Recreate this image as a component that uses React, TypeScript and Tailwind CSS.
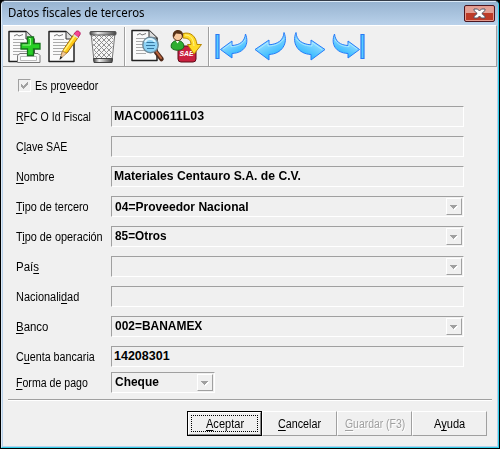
import { useLayoutEffect, useRef, useState } from "react";
import type { ReactNode } from "react";

/* Text condensed or widened to a given width, as the bitmap font sets it. */
function Fit({ w, children, className = "" }: { w: number; children: ReactNode; className?: string }) {
  const ref = useRef<HTMLSpanElement>(null);
  const [k, setK] = useState(1);
  useLayoutEffect(() => {
    if (ref.current) setK(w / ref.current.offsetWidth);
  }, [w]);
  return (
    <span className={"block " + className} style={{ width: w }}>
      <span ref={ref} className="inline-block origin-left whitespace-pre" style={{ transform: `scaleX(${k})` }}>
        {children}
      </span>
    </span>
  );
}

function Hot({ children }: { children: ReactNode }) {
  return <span className="underline decoration-1 underline-offset-[1.5px] [text-decoration-skip-ink:none]">{children}</span>;
}

function DropButton() {
  return (
    <span className="flex h-[17px] w-4 shrink-0 items-center justify-center border border-r-[#a0a0a0] border-b-[#a0a0a0] border-t-white border-l-white">
      <svg width="9" height="6" viewBox="0 0 9 6" shapeRendering="crispEdges">
        <path d="M1 2h7v1H7v1H6v1H5v1H4V5H3V4H2V3H1z" fill="#fff" />
        <path d="M0 1h7v1H6v1H5v1H4v1H3V4H2V3H1V2H0z" fill="#a0a0a0" />
      </svg>
    </span>
  );
}

function Row({ label, lw, value, vw = 0, drop = false, width = "w-[353px]", gap = "mb-[9px]" }: {
  label: ReactNode; lw: number; value?: string; vw?: number; drop?: boolean; width?: string; gap?: string;
}) {
  return (
    <div className={"flex h-[21px] " + gap}>
      <label className="w-[95px] shrink-0 pt-[3px] text-[12.5px] leading-[16px]">
        <Fit w={lw}>{label}</Fit>
      </label>
      <div className={"flex justify-between border border-t-[#a0a0a0] border-l-[#a0a0a0] border-r-white border-b-white pt-px pr-px " + width}>
        <div className={"text-[12.5px] leading-4 font-bold " + (drop ? "pl-[3px] " : "pl-[2px] ") + (drop && vw > 100 ? "pt-px" : "")}>
          {value && <Fit w={vw}>{value}</Fit>}
        </div>
        {drop && <DropButton />}
      </div>
    </div>
  );
}

function Button({ children, w, kind = "" }: { children: ReactNode; w: number; kind?: string }) {
  const face = <Fit w={w}>{children}</Fit>;
  if (kind === "default")
    return (
      <button className="h-[25px] w-[75px] border border-black">
        <span className="flex h-full border border-t-white border-l-white border-r-[#888] border-b-[#888] p-[2px]">
          <span className="flex flex-1 items-center justify-center border border-dotted border-black leading-4">{face}</span>
        </span>
      </button>
    );
  return (
    <button
      className={
        "flex h-[25px] w-[75px] items-center justify-center border border-t-white border-l-white border-r-[#a0a0a0] border-b-[#a0a0a0] leading-4 " +
        (kind === "off" ? "text-[#a0a0a0] [text-shadow:1px_1px_0_#fff]" : "")
      }
    >
      {face}
    </button>
  );
}

function Sheet() {
  return (
    <>
      <path d="M1 1.500h17l8 7.500v22.500H1z" fill="#fafafa" stroke="#222" strokeWidth="1.5" strokeLinejoin="round" />
      <path d="M18 1.500v7.500h8" fill="#ddd" stroke="#333" />
      <path d="M6 6l3-1.500 2 1.500 4-1.500" stroke="#777" fill="none" />
      <path d="M5 9.500h11M5 12.500h16M5 15.500h16M5 18.500h16M5 21.500h16M5 24.500h10" stroke="#aaa" fill="none" />
    </>
  );
}

function AddIcon() {
  return (
    <svg width="34" height="34" viewBox="0 0 34 34">
      <Sheet />
      <path d="M12 23.500h18l2 2v7H9.500v-7z" fill="#f6f6f6" stroke="#777" />
      <path d="M12.500 26.500h16v4h-16z" fill="#fff" stroke="#bbb" />
      <path d="M19.500 7h6v6.500h6.500v5.500h-6.500v6.500h-6V19H13v-5.500h6.500z" fill="#27cf25" stroke="#15741a" strokeWidth="1.3" />
      <path d="M21 8.500h1.500v6.500h-8" stroke="#9bf58d" fill="none" />
    </svg>
  );
}

function EditIcon() {
  return (
    <svg width="34" height="34" viewBox="0 0 34 34">
      <Sheet />
      <path d="M13.500 24l2-4.500L26 4l4.500 3L19 23z" fill="#ffcb19" stroke="#a46b08" />
      <path d="M16 21L27.500 5" stroke="#fff27a" strokeWidth="1.500" />
      <path d="M26 4l2-2.500c2-1.500 5 .7 4 3l-2 3z" fill="#f64494" stroke="#b51f60" />
      <path d="M25.500 4.700l4.500 3.200" stroke="#ddd" strokeWidth="1.500" />
      <path d="M12 29l2.500-8 4 2.500z" fill="#f4c792" stroke="#8c6a41" strokeWidth=".6" />
      <path d="M11.500 30l1-4 2 1.500z" fill="#222" />
    </svg>
  );
}

function TrashIcon() {
  return (
    <svg width="28" height="34" viewBox="0 0 28 34">
      <defs>
        <pattern id="mesh" width="5" height="5" patternUnits="userSpaceOnUse">
          <path d="M0 0l5 5M5 0L0 5" stroke="#888" strokeWidth=".9" />
        </pattern>
        <linearGradient id="metal">
          <stop stopColor="#444" /><stop offset=".3" stopColor="#eee" /><stop offset=".65" stopColor="#999" /><stop offset="1" stopColor="#444" />
        </linearGradient>
      </defs>
      <path d="M2 3l3 28h18l3-28z" fill="#f6f6f6" stroke="#777" />
      <path d="M3 4l3 26h16l3-26z" fill="url(#mesh)" />
      <rect x="1" y="1.500" width="26" height="3.500" rx="1" fill="url(#metal)" stroke="#555" />
      <path d="M4.500 28.500h19l-.500 4h-18z" fill="url(#metal)" stroke="#444" />
    </svg>
  );
}

function SearchIcon() {
  return (
    <svg width="34" height="34" viewBox="0 0 34 34">
      <Sheet />
      <path d="M25 23l5.500 7" stroke="#512b1c" strokeWidth="4.500" strokeLinecap="round" />
      <path d="M25.500 23l4.500 6" stroke="#bd6740" strokeWidth="2" strokeLinecap="round" />
      <circle cx="19.500" cy="16" r="7.700" fill="#8bd2f5" stroke="#708c9c" strokeWidth="1.500" />
      <path d="M14 13c2-4 8-4 10 0" fill="none" stroke="#d9f4ff" strokeWidth="2" />
      <path d="M15.500 13.500h8M15 16.500h9M16 19.500h7" stroke="#35759f" />
    </svg>
  );
}

function SaeIcon() {
  return (
    <svg width="34" height="34" viewBox="0 0 34 34">
      <path d="M10 17h13q3 0 3 4v9q0 3-3 3H11q-3 0-3-3v-9z" fill="#c9203f" stroke="#5d0b19" />
      <text x="9.500" y="27" fontFamily="Liberation Sans, sans-serif" fontSize="7.500" fontWeight="bold" fontStyle="italic" fill="#fff" textLength="14" lengthAdjust="spacingAndGlyphs">SAE</text>
      <path d="M13 4.500c8-2 13 3 14 11h4.500L24 25l-6.500-9.500H21c0-4-2-6.500-8-6.500z" fill="#ffdb27" stroke="#b88705" />
      <path d="M15 6c6 0 8.500 4 9 11" stroke="#fff393" fill="none" />
      <path d="M1.500 19c-1.500-4.500 2-7.500 6-7.500s7.500 3 6 7.500c-3 3-9 3-12 0z" fill="#2fae32" stroke="#17651c" />
      <path d="M5.500 11.500l2 3 2-3z" fill="#fff" />
      <circle cx="7.800" cy="7" r="4.600" fill="#f8c99e" stroke="#5e351e" />
      <path d="M3 7.500C1.500 0 12-1 13 5v3l-2-3-5-.5L4 8z" fill="#573218" />
    </svg>
  );
}

function Arrow({ size = "big", right = false, bar = false }: { size?: string; right?: boolean; bar?: boolean }) {
  return (
    <svg width="33" height="29" viewBox="0 0 33 29" className={right ? "-scale-x-100" : ""}>
      <defs>
        <linearGradient id={`blue-${size}-${right}`} x2=".5" y2="1">
          <stop stopColor="#239fff" /><stop offset=".45" stopColor="#8ddaff" /><stop offset="1" stopColor="#24b3ff" />
        </linearGradient>
      </defs>
      {bar && <path d="M1 2.500h3v24H1z" fill="#55ccff" stroke="#2879f5" strokeWidth="1.200" />}
      <path
        d={bar ? "M5.500 17.500L17 9v4.500c8-.4 12.500-4 13.500-11.500 4 10-1 19-13.500 19.500V26z" : "M1 17.500L15 8v4.800c8.500-.5 14.500-4.500 15-12.300C34.500 11 28 22 15 22.500V28z"}
        fill={`url(#blue-${size}-${right})`}
        stroke="#277cf8"
        strokeLinejoin="round"
      />
      <path d={bar ? "M8 17l8-5.500v3.200c7 0 12-3 14-7" : "M4 17.500l10-7v3.500c8 0 13-3 16-7.500"} fill="none" stroke="#b3ecff" strokeWidth=".8" />
    </svg>
  );
}

function Divider() {
  return <span className="h-[39px] w-[2px] border-r border-l border-r-white border-l-[#a0a0a0]" />;
}

export default function App() {
  return (
    <main className="h-[449px] w-[500px] bg-black px-px pb-px font-['Liberation_Sans',sans-serif] text-black">
      <section className="flex h-[448px] flex-col overflow-hidden rounded-t-[5px] border-t border-r border-b border-l border-t-[#343c48] border-r-[#30cfea] border-b-[#30cfea] border-l-[#dceaf6] bg-[#b9d1ea] pr-px pb-px pl-px">
        <header className="-mx-px flex h-6 shrink-0 items-start justify-between border-t border-[#dceaf7] bg-linear-to-b from-[#98b4d1] to-[#b9d1ea] pr-[3px] pl-[6px]">
          <div className="pt-[3px] font-['Noto_Sans',sans-serif] text-[12px] leading-4">
            <Fit w={137}>Datos fiscales de terceros</Fit>
          </div>
          <button className="mt-[3px] flex h-[17px] w-[31px] items-center justify-center rounded-[2px] border border-[#4b1620] bg-linear-to-b from-[#e3a095] from-45% to-[#bd3b28] to-50% shadow-[inset_0_0_0_1px_#e59a8e]">
            <svg width="13" height="11" viewBox="0 0 13 11">
              <path d="M1 1h3.500l2 2 2-2H12v1.500L8.800 5.500 12 8.500V10H8.500l-2-2-2 2H1V8.500l3.200-3L1 2.500z" fill="#fff" stroke="#535666" />
            </svg>
          </button>
        </header>
        <div className="flex flex-1 flex-col bg-[#f0f0f0]">
          <div className="flex h-[42px] items-start border-t border-r border-b border-t-white border-r-[#a0a0a0] border-b-[#a0a0a0] pt-px">
            <div className="flex w-[121px] pt-[3px] pl-[5px]">
              <span className="w-10"><AddIcon /></span>
              <span className="w-[41px]"><EditIcon /></span>
              <TrashIcon />
            </div>
            <Divider />
            <div className="flex w-[82px] pt-[2px] pl-[5px]">
              <span className="w-[39px]"><SearchIcon /></span>
              <SaeIcon />
            </div>
            <Divider />
            <div className="flex gap-[6px] pt-[5px] pl-[5px]">
              <Arrow bar size="small" />
              <Arrow />
              <Arrow right />
              <Arrow bar right size="small" />
            </div>
          </div>
          <div className="flex flex-col pt-3 pl-[13px]">
            <div className="mb-[14px] ml-[2px] flex h-[13px] items-center gap-1">
              <span className="flex size-[13px] items-center justify-center border border-t-[#a0a0a0] border-l-[#a0a0a0] border-r-white border-b-white">
                <svg width="9" height="9" viewBox="0 0 9 9" shapeRendering="crispEdges">
                  <path d="M1 3h1v1h1v1h1V4h1V3h1V2h1V1h1v3H7v1H6v1H5v1H4v1H3V7H2V6H1z" fill="#a0a0a0" />
                </svg>
              </span>
              <span className="pt-px text-[12.5px] leading-4"><Fit w={63}>Es pr<Hot>o</Hot>veedor</Fit></span>
            </div>
            <Row label={<><Hot>R</Hot>FC O Id Fiscal</>} lw={75} value="MAC000611L03" vw={90} />
            <Row label={<>C<Hot>l</Hot>ave SAE</>} lw={51} />
            <Row label={<><Hot>N</Hot>ombre</>} lw={38} value="Materiales Centauro S.A. de C.V." vw={187} />
            <Row label={<><Hot>T</Hot>ipo de tercero</>} lw={73} value="04=Proveedor Nacional" vw={134} drop />
            <Row label={<>T<Hot>i</Hot>po de operación</>} lw={87} value="85=Otros" vw={52} drop />
            <Row label={<>Paí<Hot>s</Hot></>} lw={23} drop />
            <Row label={<>Nacionali<Hot>d</Hot>ad</>} lw={63} />
            <Row label={<><Hot>B</Hot>anco</>} lw={32} value="002=BANAMEX" vw={87} drop />
            <Row label={<>C<Hot>u</Hot>enta bancaria</>} lw={79} value="14208301" vw={56} gap="mb-[5px]" />
            <Row label={<><Hot>F</Hot>orma de pago</>} lw={72} value="Cheque" vw={44} drop width="w-[104px]" gap="mb-[6px]" />
          </div>
          <hr className="ml-[5px] h-[2px] w-[484px] border-t border-b border-t-[#a0a0a0] border-b-white" />
          <footer className="flex pt-[10px] pl-[184px] text-[12.5px]">
            <Button kind="default" w={38}><Hot>A</Hot>ceptar</Button>
            <Button w={43}><Hot>C</Hot>ancelar</Button>
            <Button kind="off" w={60}><Hot>G</Hot>uardar (F3)</Button>
            <Button w={31}>A<Hot>y</Hot>uda</Button>
          </footer>
        </div>
      </section>
    </main>
  );
}
